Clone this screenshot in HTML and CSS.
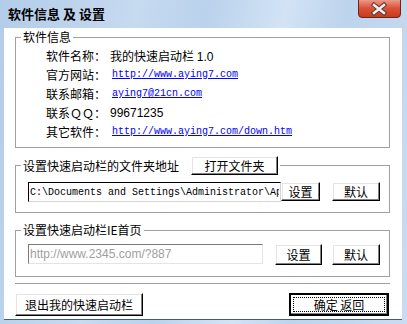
FILE: index.html
```html
<!DOCTYPE html>
<html lang="zh-CN">
<head>
  <meta charset="UTF-8" />
  <title>软件信息 及 设置</title>
  <link rel="stylesheet" href="styles.css">
</head>
<body>
  <div class="window">
    <div class="titlebar">
      <span class="title">软件信息 及 设置</span>
      <span class="close">
        <svg width="43" height="18" viewBox="0 0 43 18">
          <defs>
            <linearGradient id="red" x1="0" y1="0" x2="0" y2="1">
              <stop offset="0" stop-color="#eb9a88"/>
              <stop offset="0.45" stop-color="#d9533a"/>
              <stop offset="1" stop-color="#c8391c"/>
            </linearGradient>
          </defs>
          <path d="M0.5 0 V14 Q0.5 17.5 4 17.5 H39 Q42.5 17.5 42.5 14 V0" fill="url(#red)" stroke="#6e2416"/>
          <path d="M16 5 L26 13 M26 5 L16 13" stroke="#5b3a34" stroke-width="4.5" stroke-linecap="square"/>
          <path d="M16 5 L26 13 M26 5 L16 13" stroke="#f2eeee" stroke-width="2.5" stroke-linecap="square"/>
        </svg>
      </span>
    </div>

    <div class="client">
      <fieldset class="group info-group">
        <legend>软件信息</legend>
        <div class="info">
          <span>软件名称：</span><span>我的快速启动栏 <span class="num">1.0</span></span>
          <span>官方网站：</span><a href="#">http://www.aying7.com</a>
          <span>联系邮箱：</span><a href="#">aying7@21cn.com</a>
          <span>联系ＱＱ：</span><span class="num">99671235</span>
          <span>其它软件：</span><a href="#">http://www.aying7.com/down.htm</a>
        </div>
      </fieldset>

      <fieldset class="group folder-group">
        <legend>设置快速启动栏的文件夹地址<button class="btn open-btn">打开文件夹</button></legend>
        <div class="field-row">
          <input class="path" type="text" value="C:\Documents and Settings\Administrator\Application Data\Microsoft\Internet Explorer\Quick Launch">
          <button class="btn set-btn">设置</button>
          <button class="btn reset-btn">默认</button>
        </div>
      </fieldset>

      <fieldset class="group home-group">
        <legend>设置快速启动栏IE首页</legend>
        <div class="field-row">
          <input class="home" type="text" value="http://www.2345.com/?887">
          <button class="btn set-btn">设置</button>
          <button class="btn reset-btn">默认</button>
        </div>
      </fieldset>

      <div class="separator"></div>

      <div class="actions">
        <button class="btn quit-btn">退出我的快速启动栏</button>
        <button class="btn ok-btn">确定 返回</button>
      </div>
    </div>
  </div>
</body>
</html>
```

FILE: styles.css
```css
body {
  margin: 0;
  font-family: "Noto Sans CJK SC", "Liberation Sans", sans-serif;
  font-size: 12px;
  color: #000;
}

.window {
  width: 407px;
  height: 324px;
  box-sizing: border-box;
  display: flex;
  flex-direction: column;
  padding: 0 5px 5px 4px;
  background: linear-gradient(100deg, #b3cce8 0%, #c6daf0 30%, #bad2ec 45%, #d2e3f5 62%, #bdd4ed 75%, #c9dcf1 100%);
}

.titlebar {
  height: 28px;
  display: flex;
  justify-content: space-between;
  align-items: flex-start;
}

.title {
  line-height: 28px;
  padding-left: 4px;
  font-weight: bold;
  font-size: 13px;
}

.close {
  margin-right: 1px;
  height: 18px;
}

.close svg {
  display: block;
}

.client {
  flex: 1;
  background: #fff;
  padding: 2px 12px 0 11px;
  display: flex;
  flex-direction: column;
  box-shadow: 0 1px 0 #3f5c7a;
}

/* group boxes */
.group {
  margin: 0;
  padding: 0;
  border: 1px solid #a0a0a0;
  min-width: 0;
}

.group legend {
  margin-left: 5px;
  padding: 0 2px;
  line-height: 14px;
}

.info {
  display: grid;
  grid-template-columns: 64px auto;
  grid-auto-rows: 19px;
  align-items: center;
  padding: 2px 0 6px 30px;
}

.info a {
  font-family: "Liberation Mono", monospace;
  font-size: 10px;
  color: #0000ff;
  padding-left: 2px;
}

.num {
  font-family: "Liberation Sans", Arial, sans-serif;
  font-size: 12px;
}

.folder-group {
  margin-top: 8px;
}

.folder-group legend {
  display: flex;
  align-items: center;
}

.home-group {
  margin-top: 10px;
}

.field-row {
  display: flex;
  align-items: flex-start;
  padding-left: 12px;
}

.folder-group .field-row {
  padding-top: 7px;
  padding-bottom: 10px;
}

.home-group .field-row {
  padding-top: 7px;
  padding-bottom: 11px;
}

input {
  box-sizing: border-box;
  height: 20px;
  margin: 0;
  padding: 0 1px;
  border: 1px solid;
  border-color: #000 #d4d4d4 #d4d4d4 #000;
  background: #fff;
  outline: none;
}

.path {
  width: 253px;
  font-family: "Liberation Mono", monospace;
  font-size: 10px;
  color: #000;
}

.home {
  width: 235px;
  border-color: #7a7a7a #e4e4e4 #e4e4e4 #7a7a7a;
  font-family: "Liberation Sans", Arial, sans-serif;
  font-size: 12px;
  color: #a0a0a0;
}

/* buttons */
.btn {
  box-sizing: border-box;
  margin: 0;
  padding: 0;
  font-family: "Noto Sans CJK SC", sans-serif;
  font-size: 12px;
  line-height: 14px;
  color: #000;
  background: #fff;
  border: 1px solid;
  border-color: #fff #000 #000 #fff;
  box-shadow: inset -1px -1px 0 #808080, inset 1px 1px 0 #e4e4e4;
}

.open-btn {
  width: 87px;
  height: 19px;
  margin-left: 12px;
}

.folder-group .set-btn {
  width: 39px;
  height: 19px;
}

.folder-group .reset-btn {
  width: 48px;
  height: 19px;
  margin-left: 12px;
}

.home-group .set-btn {
  width: 47px;
  height: 21px;
  margin-left: 12px;
}

.home-group .reset-btn {
  width: 48px;
  height: 21px;
  margin-left: 10px;
}

.separator {
  margin-top: 6px;
  height: 1px;
  background: #a0a0a0;
  border-bottom: 1px solid #fff;
}

.actions {
  display: flex;
  justify-content: space-between;
  margin-top: 8px;
}

.quit-btn {
  width: 128px;
  height: 23px;
}

.ok-btn {
  width: 100px;
  height: 23px;
  margin-right: 1px;
  border: 2px solid #000;
  box-shadow: inset -1px -1px 0 #808080;
  outline: 1px dotted #000;
  outline-offset: -5px;
}
```
